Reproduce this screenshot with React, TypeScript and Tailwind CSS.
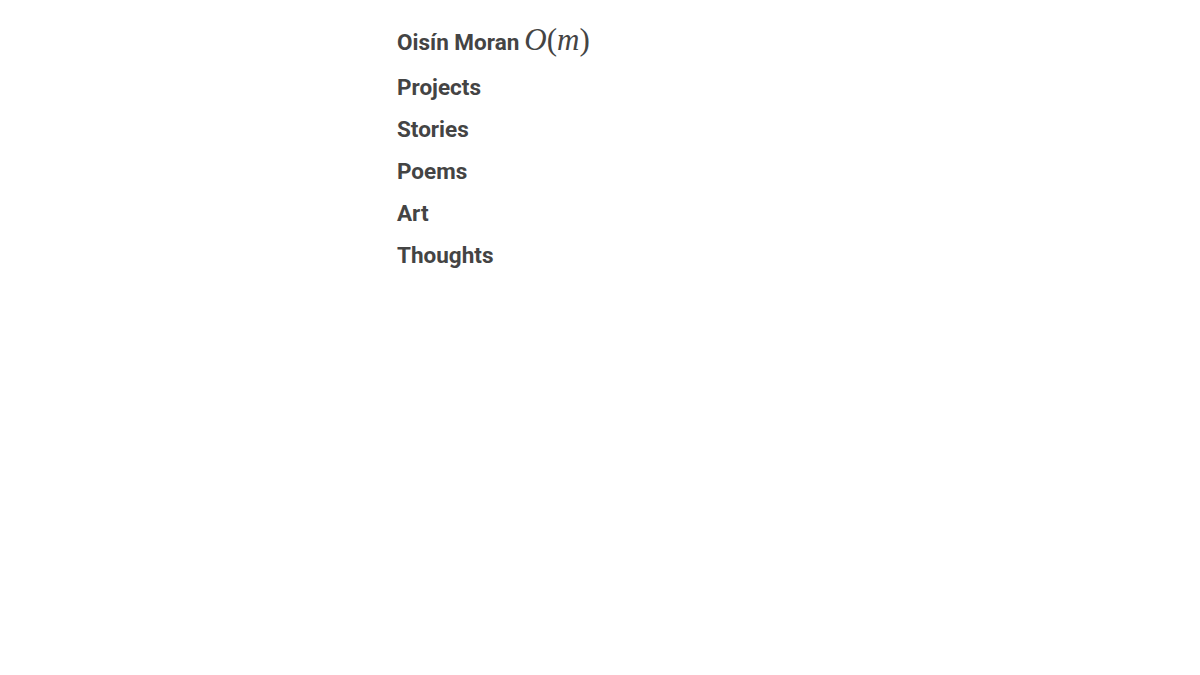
import React from "react";

const links = ["Projects", "Stories", "Poems", "Art", "Thoughts"];

export default function App() {
  return (
    <div className="min-h-screen bg-white font-['Roboto',sans-serif] text-[#444]">
      <div className="mx-auto w-[406px] pt-[24px]">
        <h1 className="flex items-baseline text-[22.5px] font-bold leading-[32px]">
          Oisín Moran
          <span className="ml-[5px] font-['Liberation_Serif',serif] text-[31px] font-normal text-[#444]">
            <span className="italic">O</span>(<span className="italic">m</span>)
          </span>
        </h1>
        <nav className="mt-[8px] flex flex-col">
          {links.map((l) => (
            <a key={l} href="#" className="text-[22.5px] font-bold leading-[42px]">
              {l}
            </a>
          ))}
        </nav>
      </div>
    </div>
  );
}
